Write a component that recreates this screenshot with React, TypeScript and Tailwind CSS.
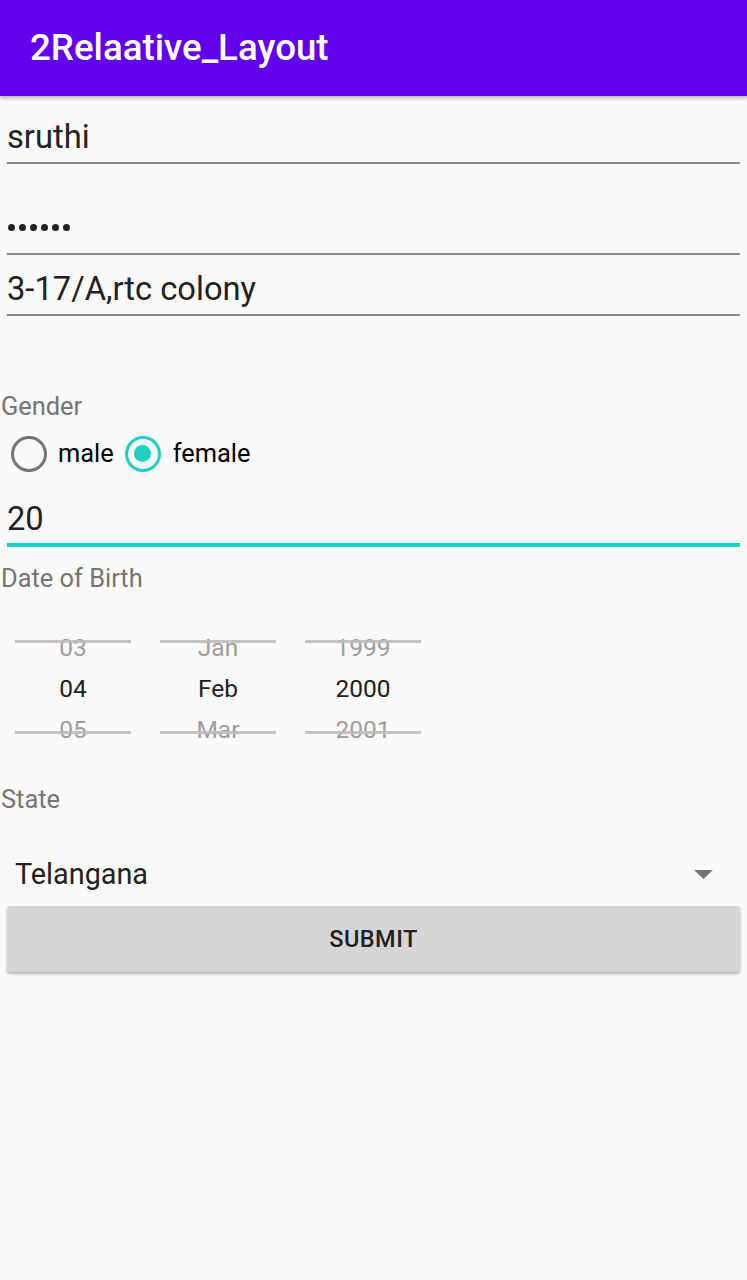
import React from "react";

const font = { fontFamily: "Roboto, 'Noto Sans', 'Liberation Sans', sans-serif" };

function Picker({ prev, cur, next }: { prev: string; cur: string; next: string }) {
  return (
    <div className="relative w-[116px] h-[123px]">
      <div className="h-[41px] text-center text-[24.5px] leading-[24px] text-[#9e9e9e]">{prev}</div>
      <div className="h-[41px] text-center text-[24.5px] leading-[24px] text-[#212121]">{cur}</div>
      <div className="h-[41px] text-center text-[24.5px] leading-[24px] text-[#9e9e9e]">{next}</div>
      <div className="absolute left-0 right-0 top-[4px] h-[3px] bg-[#bdbdbd]/90" />
      <div className="absolute left-0 right-0 top-[95px] h-[3px] bg-[#bdbdbd]/90" />
    </div>
  );
}

export default function App() {
  return (
    <div className="min-h-[1280px] w-[747px] bg-[#fafafa] relative" style={font}>
      <div className="relative z-10 h-[96px] bg-[#6200ee] pl-[30px] pt-[30px] shadow-[0_2px_4px_rgba(0,0,0,0.3)]">
        <div className="text-[36.7px] leading-none font-medium text-white">2Relaative_Layout</div>
      </div>

      <div className="px-[7px]">
        <div className="pt-[25px] text-[32.7px] leading-none text-[#212121]">sruthi</div>
        <div className="mt-[8px] h-[2px] bg-[#8a8a8a]" />

        <div className="pt-[60px] pl-[1px] flex gap-[4px] h-[89px] items-start">
          {Array.from({ length: 6 }).map((_, i) => (
            <span key={i} className="w-[7px] h-[7px] rounded-full bg-[#212121]" />
          ))}
        </div>
        <div className="h-[2px] bg-[#8a8a8a]" />

        <div className="pt-[18px] text-[32.7px] leading-none text-[#212121]">3-17/A,rtc colony</div>
        <div className="mt-[9px] h-[2px] bg-[#8a8a8a]" />
      </div>

      <div className="pt-[78px] pl-[1px] text-[25.4px] leading-none text-[#757575]">Gender</div>

      <div className="mt-[15px] flex items-center h-[38px] pl-[11px]">
        <div className="w-[36px] h-[36px] rounded-full border-[3.5px] border-[#757575]" />
        <span className="ml-[11px] text-[25.4px] leading-none text-black">male</span>
        <div className="ml-[11px] w-[36px] h-[36px] rounded-full border-[3.5px] border-[#1fd1c1] flex items-center justify-center">
          <div className="w-[17px] h-[17px] rounded-full bg-[#1fd1c1]" />
        </div>
        <span className="ml-[12px] text-[25.4px] leading-none text-black">female</span>
      </div>

      <div className="px-[7px]">
        <div className="pt-[30px] text-[32.7px] leading-none text-[#212121]">20</div>
        <div className="mt-[7px] h-[4px] bg-[#1fd1c1]" />
      </div>

      <div className="pt-[19px] pl-[1px] text-[25.4px] leading-none text-[#757575]">Date of Birth</div>

      <div className="mt-[45px] pl-[15px] flex gap-[29px]">
        <Picker prev="03" cur="04" next="05" />
        <Picker prev="Jan" cur="Feb" next="Mar" />
        <Picker prev="1999" cur="2000" next="2001" />
      </div>

      <div className="mt-[28px] pl-[1px] text-[25.4px] leading-none text-[#757575]">State</div>

      <div className="mt-[40px] flex items-center justify-between pl-[15px] pr-[34px] h-[44px]">
        <span className="text-[28.8px] leading-none text-[#212121]">Telangana</span>
        <svg width="19" height="9" viewBox="0 0 19 9">
          <path d="M0 0 L19 0 L9.5 9 Z" fill="#757575" />
        </svg>
      </div>

      <div className="px-[7px] mt-[10px]">
        <div className="h-[66px] rounded-[3px] bg-[#d6d6d6] shadow-[0_2px_3px_rgba(0,0,0,0.28)] flex items-center justify-center">
          <span className="text-[23.5px] font-medium tracking-[0.5px] text-[#222]">SUBMIT</span>
        </div>
      </div>
    </div>
  );
}
